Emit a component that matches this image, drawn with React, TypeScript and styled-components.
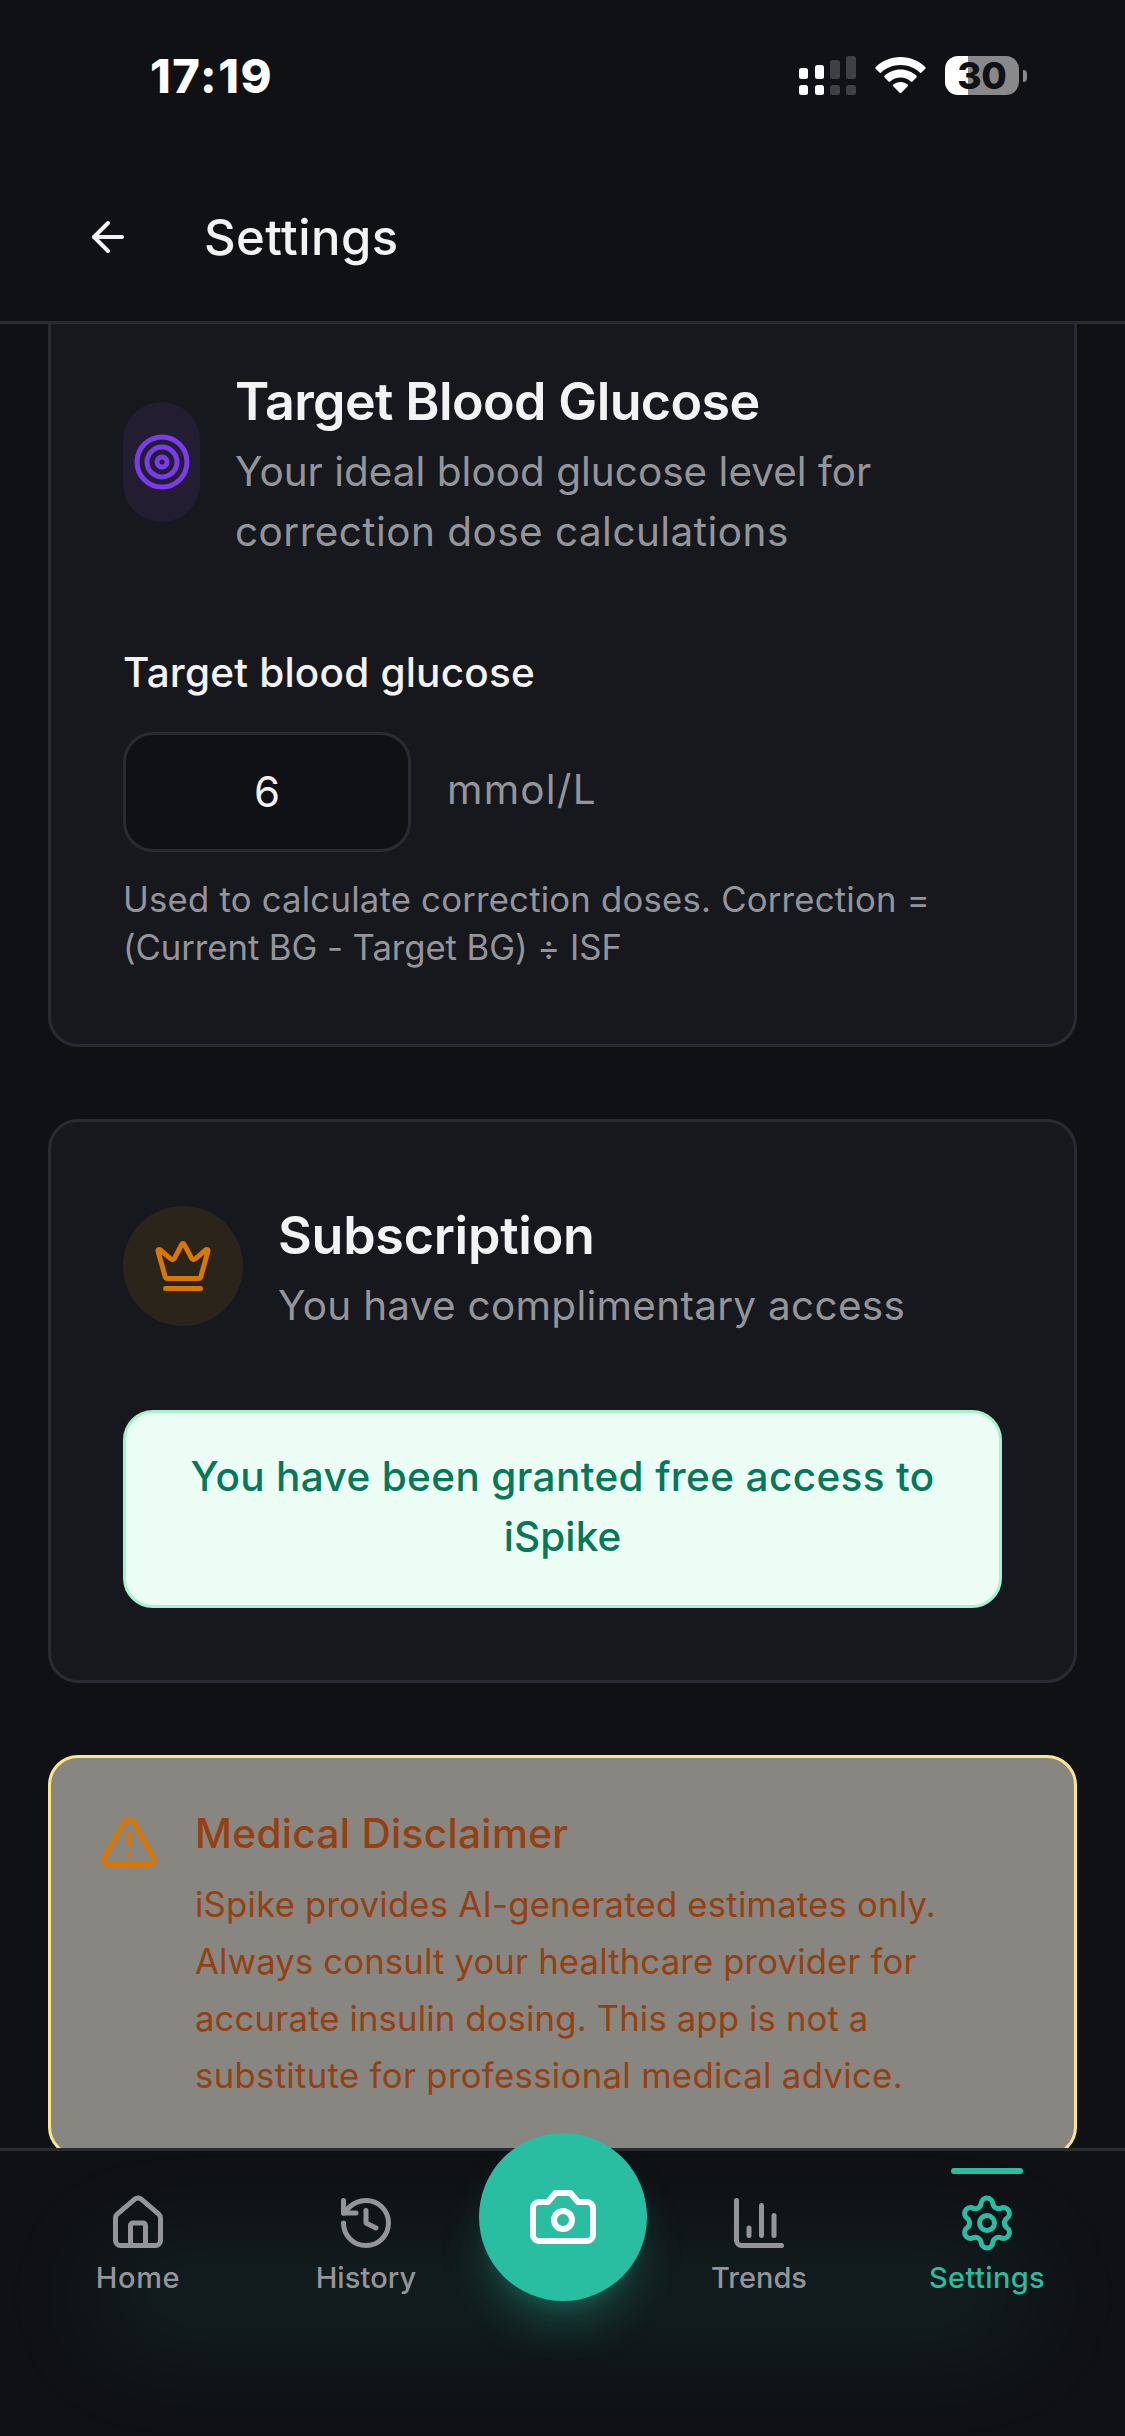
import React from "react";
import styled, { createGlobalStyle } from "styled-components";
import {
  ArrowLeft,
  ChartColumn,
  Crown,
  History,
  House,
  Settings,
  Target,
  TriangleAlert,
} from "lucide-react";

const color = {
  bg: "#101115",
  card: "#17181d",
  border: "#2a2b32",
  text: "#f3f3f4",
  muted: "#94959b",
  teal: "#29bda1",
  purple: "#7c3aed",
  amber: "#d97706",
  brown: "#963f10",
};

const GlobalStyle = createGlobalStyle`
  * { box-sizing: border-box; }
  body {
    margin: 0;
    background: ${color.bg};
    color: ${color.text};
    font-family: Inter, "Liberation Sans", sans-serif;
  }
  h1, h2, h3, p { margin: 0; }
`;

const Screen = styled.div`
  display: flex;
  flex-direction: column;
  width: 1125px;
  height: 2436px;
  overflow: hidden;
  background: ${color.bg};
`;

/* Status bar */

const StatusBar = styled.div`
  display: flex;
  justify-content: space-between;
  flex: none;
  height: 153px;
  padding: 0 98px 0 150px;
`;

const Clock = styled.div`
  padding-top: 46px;
  color: #fff;
  font-size: 47px;
  font-weight: 800;
  line-height: 60px;
  letter-spacing: 1.6px;
`;

const StatusIcons = styled.div`
  display: flex;
  align-items: flex-start;
  padding-top: 56px;
`;

const Battery = styled.div`
  display: flex;
  align-items: center;
  justify-content: center;
  width: 74px;
  height: 39px;
  margin-left: 19px;
  border-radius: 13px;
  background: linear-gradient(to right, #fff 23px, #89898b 23px);
  color: ${color.bg};
  font-size: 37px;
  font-weight: 800;
  line-height: 39px;
  letter-spacing: -0.3px;
`;

const BatteryNub = styled.div`
  width: 4px;
  height: 12px;
  margin: 14px 0 0 4px;
  border-radius: 0 4px 4px 0;
  background: #89898b;
`;

/* Page header */

const Header = styled.header`
  display: flex;
  align-items: center;
  flex: none;
  gap: 72px;
  height: 171px;
  padding-left: 84px;
  border-bottom: 3px solid ${color.border};
`;

const BackButton = styled.div`
  display: flex;
`;

const PageTitle = styled.h1`
  padding-top: 2px;
  font-size: 49px;
  font-weight: 500;
  line-height: 60px;
  letter-spacing: 0.45px;
`;

/* Scrolled content */

const Content = styled.main`
  display: flex;
  flex-direction: column;
  flex: none;
  gap: 72px;
  height: 1824px;
  padding: 0 48px;
  overflow: hidden;
`;

const Card = styled.section<{ $cut?: boolean }>`
  flex: none;
  padding: ${(p) => (p.$cut ? "42px" : "78px")} 72px ${(p) => (p.$cut ? "73px" : "72px")};
  border: 3px solid ${color.border};
  border-top-width: ${(p) => (p.$cut ? 0 : 3)}px;
  border-radius: ${(p) => (p.$cut ? "0 0 30px 30px" : "30px")};
  background: ${color.card};
`;

const CardHeader = styled.div`
  display: flex;
  align-items: center;
  gap: 35px;
`;

const IconBadge = styled.div<{ $width: number; $tint: string }>`
  display: flex;
  align-items: center;
  justify-content: center;
  flex: none;
  width: ${(p) => p.$width}px;
  height: 120px;
  margin-bottom: 4px;
  border-radius: 60px;
  background: ${(p) => p.$tint};
`;

const Heading = styled.div`
  display: flex;
  flex-direction: column;
  gap: 4px;
`;

const CardTitle = styled.h2<{ $track: number }>`
  font-size: 52px;
  font-weight: 600;
  line-height: 72px;
  letter-spacing: ${(p) => p.$track}px;
  white-space: nowrap;
`;

const Body = styled.p`
  color: ${color.muted};
  font-size: 40.5px;
  line-height: 60px;
`;

const Hint = styled.p`
  margin-top: 23px;
  color: ${color.muted};
  font-size: 34.7px;
  line-height: 48px;
`;

const Line = styled.span<{ $track?: number }>`
  display: block;
  letter-spacing: ${(p) => p.$track ?? 0}px;
  white-space: nowrap;
`;

const FieldLabel = styled.div`
  margin-top: 81px;
  font-size: 40.5px;
  font-weight: 500;
  line-height: 60px;
  letter-spacing: 0.2px;
`;

const FieldRow = styled.div`
  display: flex;
  gap: 36px;
  margin-top: 29px;
`;

const NumberField = styled.div`
  display: flex;
  align-items: center;
  justify-content: center;
  width: 288px;
  height: 120px;
  padding-bottom: 2px;
  border: 3px solid ${color.border};
  border-radius: 30px;
  background: ${color.bg};
  font-size: 42px;
`;

const Unit = styled.div`
  padding-top: 28px;
  color: ${color.muted};
  font-size: 40.5px;
  line-height: 60px;
  letter-spacing: 1.2px;
`;

const Notice = styled.div`
  margin-top: 74px;
  padding: 34px 36px 38px;
  border: 3px solid #a7f3d0;
  border-radius: 30px;
  background: #ecfdf5;
  color: #047857;
  font-size: 40.5px;
  font-weight: 500;
  line-height: 60px;
  text-align: center;
`;

const Disclaimer = styled.section`
  display: flex;
  align-items: flex-start;
  flex: none;
  gap: 36px;
  padding: 46px 48px 50px;
  border: 3px solid #fde68a;
  border-radius: 30px;
  background: #888680;
  color: ${color.brown};
`;

const WarningIcon = styled.div`
  display: flex;
  padding-top: 8px;
  color: ${color.amber};
`;

const DisclaimerTitle = styled.h3`
  font-size: 40.5px;
  font-weight: 500;
  line-height: 60px;
  letter-spacing: 0.34px;
`;

const DisclaimerText = styled.p`
  margin-top: 12px;
  font-size: 34.7px;
  line-height: 57px;
`;

/* Bottom navigation */

const Nav = styled.nav`
  position: relative;
  display: flex;
  align-items: flex-start;
  flex: none;
  height: 288px;
  padding: 0 24px;
  border-top: 3px solid ${color.border};
  background: ${color.bg};
`;

const Glow = styled.div`
  position: absolute;
  inset: 0;
  overflow: hidden;

  &::before {
    content: "";
    position: absolute;
    left: 90px;
    right: 90px;
    top: 90px;
    height: 110px;
    border-radius: 55px;
    background: rgba(41, 189, 161, 0.08);
    filter: blur(48px);
  }
`;

const NavItem = styled.div<{ $active?: boolean }>`
  position: relative;
  display: flex;
  flex-direction: column;
  align-items: center;
  gap: 4px;
  width: 228px;
  padding-top: 42px;
  color: ${(p) => (p.$active ? color.teal : color.muted)};
`;

const ActiveBar = styled.div`
  position: absolute;
  top: 17px;
  width: 72px;
  height: 6px;
  border-radius: 3px;
  background: ${color.teal};
`;

const NavLabel = styled.div<{ $track: number }>`
  font-size: 29px;
  font-weight: 500;
  line-height: 42px;
  letter-spacing: ${(p) => p.$track}px;
`;

const CameraSlot = styled.div`
  position: relative;
  display: flex;
  justify-content: center;
  width: 165px;
`;

const CameraButton = styled.div`
  display: flex;
  align-items: center;
  justify-content: center;
  flex: none;
  width: 168px;
  height: 168px;
  margin: -18px 0 0 1px;
  border-radius: 50%;
  background: ${color.teal};
  box-shadow:
    0 30px 45px -9px rgba(41, 189, 161, 0.3),
    0 12px 18px -12px rgba(41, 189, 161, 0.3);
`;

const SignalIcon = () => (
  <svg width="57" height="39" viewBox="0 0 57 39">
    <g fill="#fff">
      <rect x="0" y="12" width="9" height="11" rx="2.5" />
      <rect x="16" y="9" width="9" height="14" rx="2.5" />
      <rect x="0" y="29" width="9" height="10" rx="2.5" />
      <rect x="16" y="29" width="9" height="10" rx="2.5" />
    </g>
    <g fill="#3f4044">
      <rect x="31" y="4" width="10" height="19" rx="2.5" />
      <rect x="47" y="0" width="10" height="23" rx="2.5" />
      <rect x="31" y="29" width="10" height="10" rx="2.5" />
      <rect x="47" y="29" width="10" height="10" rx="2.5" />
    </g>
  </svg>
);

const WifiShape = styled.svg`
  margin: 1px 0 0 19px;
`;

const WifiIcon = () => (
  <WifiShape width="51" height="37" viewBox="0 0 51 37" fill="#fff">
    <path d="M25.5 0C35 0 43.800 3.700 50.300 10c.5.5.5 1.200 0 1.700l-3.800 3.900c-.5.5-1.200.5-1.700 0C39.600 10.700 32.800 8 25.500 8S11.400 10.700 6.200 15.600c-.5.5-1.200.5-1.700 0L.7 11.700c-.5-.5-.5-1.200 0-1.700C7.200 3.700 16 0 25.500 0Z" />
    <path d="M25.500 12.600c6.100 0 11.700 2.400 15.900 6.200.5.500.5 1.200 0 1.700l-3.900 3.900c-.5.5-1.200.5-1.700 0-2.800-2.400-6.400-3.900-10.300-3.900s-7.500 1.500-10.300 3.900c-.5.5-1.200.5-1.700 0l-3.900-3.900c-.5-.5-.5-1.200 0-1.700 4.200-3.800 9.800-6.200 15.900-6.200Z" />
    <path d="M25.500 25c2.700 0 5.100.9 7.100 2.500.5.400.5 1.200.1 1.700l-6.300 6.500c-.5.5-1.300.5-1.800 0l-6.300-6.500c-.5-.5-.4-1.300.1-1.700 2-1.600 4.400-2.500 7.100-2.500Z" />
  </WifiShape>
);

const CameraIcon = () => (
  <svg
    width="72"
    height="72"
    viewBox="0 0 24 24"
    fill="none"
    stroke="#fff"
    strokeWidth="2"
    strokeLinecap="round"
    strokeLinejoin="round"
  >
    <path d="M14.500 4h-5L7 7H4a2 2 0 0 0-2 2v9a2 2 0 0 0 2 2h16a2 2 0 0 0 2-2V9a2 2 0 0 0-2-2h-3l-2.500-3z" />
    <circle cx="12" cy="13" r="3" />
  </svg>
);

const TargetIcon = styled(Target)`
  flex: none;
`;

export default function App() {
  return (
    <Screen>
      <GlobalStyle />
      <StatusBar>
        <Clock>17:19</Clock>
        <StatusIcons>
          <SignalIcon />
          <WifiIcon />
          <Battery>30</Battery>
          <BatteryNub />
        </StatusIcons>
      </StatusBar>

      <Header>
        <BackButton>
          <ArrowLeft size={48} />
        </BackButton>
        <PageTitle>Settings</PageTitle>
      </Header>

      <Content>
        <Card $cut>
          <CardHeader>
            <IconBadge $width={77} $tint="#221d31">
              <TargetIcon size={60} color={color.purple} />
            </IconBadge>
            <Heading>
              <CardTitle $track={-0.62}>Target Blood Glucose</CardTitle>
              <Body>
                <Line>Your ideal blood glucose level for</Line>
                <Line $track={0.45}>correction dose calculations</Line>
              </Body>
            </Heading>
          </CardHeader>
          <FieldLabel>Target blood glucose</FieldLabel>
          <FieldRow>
            <NumberField>6</NumberField>
            <Unit>mmol/L</Unit>
          </FieldRow>
          <Hint>
            <Line $track={0.22}>Used to calculate correction doses. Correction =</Line>
            <Line $track={-0.06}>(Current BG - Target BG) ÷ ISF</Line>
          </Hint>
        </Card>

        <Card>
          <CardHeader>
            <IconBadge $width={120} $tint="#2b241b">
              <Crown size={60} color={color.amber} />
            </IconBadge>
            <Heading>
              <CardTitle $track={-0.25}>Subscription</CardTitle>
              <Body>
                <Line $track={0.28}>You have complimentary access</Line>
              </Body>
            </Heading>
          </CardHeader>
          <Notice>
            <Line $track={0.36}>You have been granted free access to</Line>
            <Line $track={0.1}>iSpike</Line>
          </Notice>
        </Card>

        <Disclaimer>
          <WarningIcon>
            <TriangleAlert size={60} />
          </WarningIcon>
          <div>
            <DisclaimerTitle>Medical Disclaimer</DisclaimerTitle>
            <DisclaimerText>
              <Line $track={0.22}>iSpike provides AI-generated estimates only.</Line>
              <Line $track={0.15}>Always consult your healthcare provider for</Line>
              <Line $track={0.14}>accurate insulin dosing. This app is not a</Line>
              <Line $track={0.33}>substitute for professional medical advice.</Line>
            </DisclaimerText>
          </div>
        </Disclaimer>
      </Content>

      <Nav>
        <Glow />
        <NavItem>
          <House size={60} />
          <NavLabel $track={0.6}>Home</NavLabel>
        </NavItem>
        <NavItem>
          <History size={60} />
          <NavLabel $track={0.1}>History</NavLabel>
        </NavItem>
        <CameraSlot>
          <CameraButton>
            <CameraIcon />
          </CameraButton>
        </CameraSlot>
        <NavItem>
          <ChartColumn size={60} />
          <NavLabel $track={0}>Trends</NavLabel>
        </NavItem>
        <NavItem $active>
          <ActiveBar />
          <Settings size={60} />
          <NavLabel $track={0.4}>Settings</NavLabel>
        </NavItem>
      </Nav>
    </Screen>
  );
}
